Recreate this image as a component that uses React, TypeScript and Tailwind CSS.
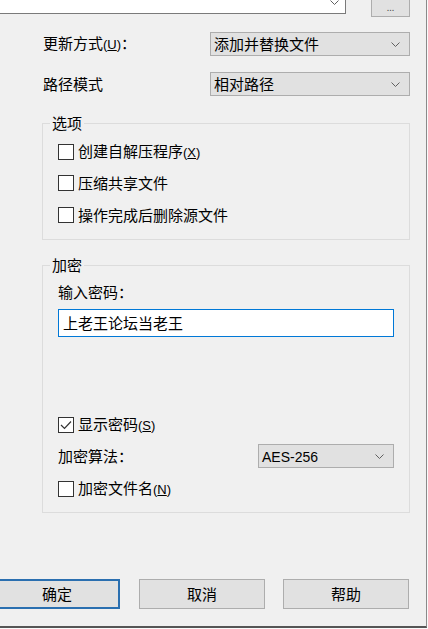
import { ReactNode } from 'react'

const font = "font-['Noto_Sans_CJK_SC','Liberation_Sans',sans-serif]"
const latin = "font-['Liberation_Sans',sans-serif] text-[13px]"

function Chevron() {
  return (
    <svg width="9" height="5" viewBox="0 0 9 5">
      <path d="M0.5 0.5 L4.5 4.5 L8.5 0.5" fill="none" stroke="#606060" strokeWidth="1" />
    </svg>
  )
}

function Combo({ children, className }: { children: ReactNode; className: string }) {
  return (
    <div
      className={
        'flex items-center justify-between h-[24px] bg-[#e1e1e1] border border-[#adadad] pl-[3px] pr-[9px] text-[15px] leading-[20px] ' +
        className
      }
    >
      <span>{children}</span>
      <Chevron />
    </div>
  )
}

function Check({ checked, children }: { checked?: boolean; children: ReactNode }) {
  return (
    <div className="flex items-center h-[16px]">
      <div className="w-[16px] h-[16px] bg-white border border-[#333] flex items-center justify-center">
        {checked && (
          <svg width="12" height="10" viewBox="0 0 12 10">
            <path d="M1 5 L4.5 8.5 L11 1.5" fill="none" stroke="#333" strokeWidth="1.2" />
          </svg>
        )}
      </div>
      <span className="ml-[4px] text-[15px] leading-[20px]">{children}</span>
    </div>
  )
}

function Mnemonic({ k }: { k: string }) {
  return (
    <span className={latin}>
      (<span className="underline">{k}</span>)
    </span>
  )
}

function Button({ children, primary }: { children: ReactNode; primary?: boolean }) {
  return (
    <div
      className={
        'w-[126px] h-[30px] bg-[#e1e1e1] flex items-center justify-center text-[15px] ' +
        (primary ? 'border-2 border-[#2a6fb0]' : 'border border-[#adadad]')
      }
    >
      {children}
    </div>
  )
}

export default function App() {
  return (
    <div className={'w-[428px] h-[629px] bg-[#fafafa] text-black ' + font}>
      <div className="w-[427px] h-[628px] bg-[#f0f0f0] border-r border-b-2 border-r-[#8a8a8a] border-b-[#555] overflow-hidden">
        {/* top, partly cut-off row */}
        <div className="flex h-[16px]">
          <div className="w-[346px] h-[14px] bg-white border-r border-b border-[#7a7a7a] flex justify-end pr-[6px]">
            <Chevron />
          </div>
          <div className="ml-[25px] w-[39px] h-[17px] bg-[#e1e1e1] border-x border-b border-[#adadad] flex items-end justify-center pb-[4px] text-[9px] leading-none text-[#555]">
            ...
          </div>
        </div>

        <div className="flex items-center mt-[16px] pl-[43px]">
          <span className="w-[167px] text-[15px] leading-[20px]">
            更新方式<Mnemonic k="U" />：
          </span>
          <Combo className="w-[200px]">添加并替换文件</Combo>
        </div>

        <div className="flex items-center mt-[16px] pl-[43px]">
          <span className="w-[167px] text-[15px] leading-[20px]">路径模式</span>
          <Combo className="w-[200px]">相对路径</Combo>
        </div>

        <fieldset className="ml-[42px] mt-[17px] w-[368px] border border-[#dcdcdc] pb-[16px]">
          <legend className="ml-[7px] px-[2px] text-[15px] leading-[20px]">选项</legend>
          <div className="pl-[15px] pt-[11px]">
            <Check>
              创建自解压程序<Mnemonic k="X" />
            </Check>
            <div className="mt-[15px]">
              <Check>压缩共享文件</Check>
            </div>
            <div className="mt-[16px]">
              <Check>操作完成后删除源文件</Check>
            </div>
          </div>
        </fieldset>

        <fieldset className="ml-[42px] mt-[15px] w-[368px] h-[258px] border border-[#dcdcdc]">
          <legend className="ml-[7px] px-[2px] text-[15px] leading-[20px]">加密</legend>
          <div className="pl-[15px]">
            <div className="pt-[7px] text-[15px] leading-[20px]">输入密码：</div>
            <div className="mt-[7px] w-[336px] h-[28px] bg-white border border-[#0078d7] flex items-center pl-[4px] text-[15px]">
              上老王论坛当老王
            </div>
            <div className="mt-[80px]">
              <Check checked>
                显示密码<Mnemonic k="S" />
              </Check>
            </div>
            <div className="mt-[11px] flex items-center">
              <span className="w-[200px] text-[15px] leading-[20px]">加密算法：</span>
              <Combo className="w-[136px]">
                <span className="font-['Liberation_Sans',sans-serif] text-[14px]">AES-256</span>
              </Combo>
            </div>
            <div className="mt-[13px]">
              <Check>
                加密文件名<Mnemonic k="N" />
              </Check>
            </div>
          </div>
        </fieldset>

        <div className="flex mt-[66px] ml-[-6px] gap-[19px]">
          <Button primary>确定</Button>
          <Button>取消</Button>
          <div className="-ml-[1px]">
            <Button>帮助</Button>
          </div>
        </div>
      </div>
    </div>
  )
}
